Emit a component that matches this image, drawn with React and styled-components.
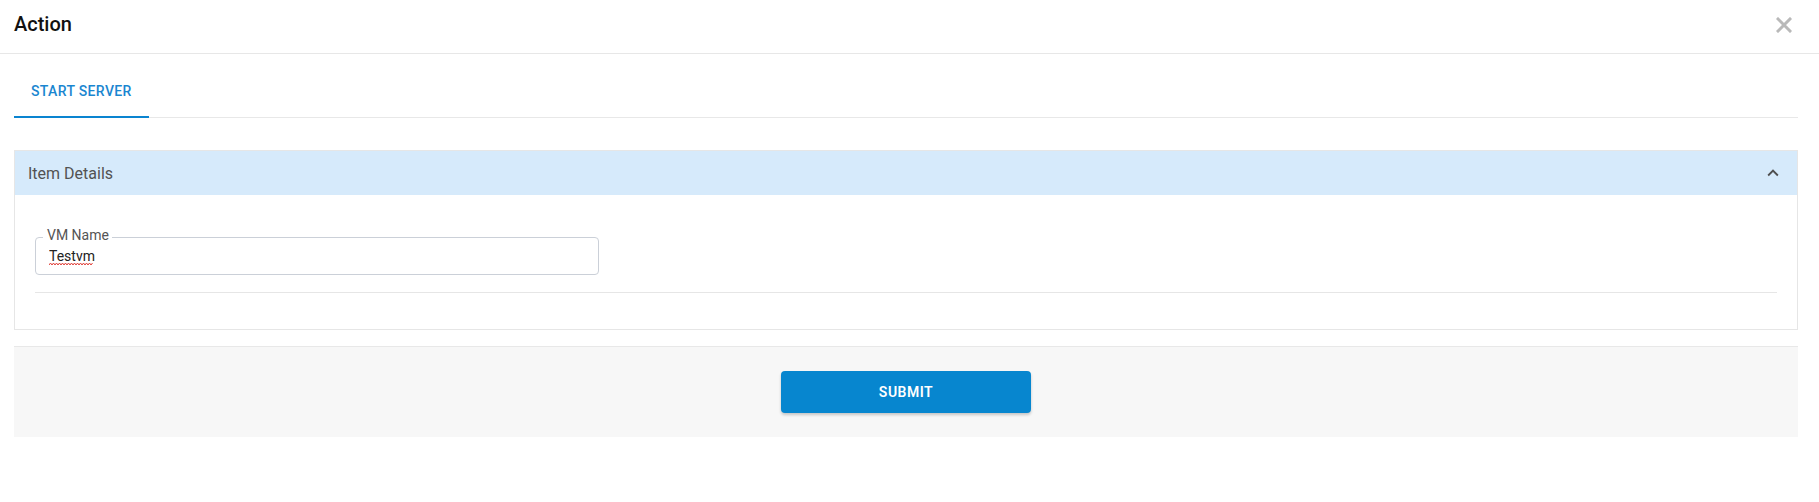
import React from "react";
import styled, { createGlobalStyle } from "styled-components";

const GlobalStyle = createGlobalStyle`
  body {
    margin: 0;
    background: #fff;
    font-family: Roboto, "Liberation Sans", Arial, sans-serif;
  }
`;

const CloseIcon = () => (
  <svg width="16" height="16" viewBox="0 0 16 16">
    <path d="M2 2L14 14M14 2L2 14" stroke="currentColor" strokeWidth="3" strokeLinecap="square" />
  </svg>
);

const ExpandLess = () => (
  <svg width="22" height="22" viewBox="0 0 24 24" fill="currentColor">
    <path d="M12 8l-6 6 1.41 1.41L12 10.83l4.59 4.58L18 14z" />
  </svg>
);

const Squiggle = () => (
  <SquiggleMark width="44" height="4" viewBox="0 0 44 4">
    <path
      d="M0 3 L1.5 1 L3 3 L4.5 1 L6 3 L7.5 1 L9 3 L10.5 1 L12 3 L13.5 1 L15 3 L16.5 1 L18 3 L19.5 1 L21 3 L22.5 1 L24 3 L25.5 1 L27 3 L28.5 1 L30 3 L31.5 1 L33 3 L34.5 1 L36 3 L37.5 1 L39 3 L40.5 1 L42 3 L43.5 1"
      fill="none"
      stroke="#e0403a"
      strokeWidth="1"
    />
  </SquiggleMark>
);

const App = () => {
  return (
    <>
      <GlobalStyle />
      <Dialog>
        <Header>
          <Title>Action</Title>
          <CloseButton aria-label="close">
            <CloseIcon />
          </CloseButton>
        </Header>
        <Content>
          <TabBar>
            <Tab active>Start Server</Tab>
          </TabBar>
          <Panel>
            <PanelHeader>
              <PanelTitle>Item Details</PanelTitle>
              <Chevron>
                <ExpandLess />
              </Chevron>
            </PanelHeader>
            <PanelBody>
              <Field>
                <FieldLabel>VM Name</FieldLabel>
                <TextInput defaultValue="Testvm" spellCheck={false} />
                <Squiggle />
              </Field>
              <Divider />
            </PanelBody>
          </Panel>
          <Footer>
            <SubmitButton>Submit</SubmitButton>
          </Footer>
        </Content>
      </Dialog>
    </>
  );
};

export default App;

const Dialog = styled.div`
  width: 100%;
  min-height: 502px;
  background: #fff;
`;
const Header = styled.div`
  height: 54px;
  box-sizing: border-box;
  padding: 12px 27px 0 14px;
  display: flex;
  justify-content: space-between;
  align-items: flex-start;
  border-bottom: 1px solid #e7e7e7;
`;
const Title = styled.h2`
  margin: 0;
  font-size: 20px;
  line-height: 24px;
  font-weight: 500;
  color: #111;
`;
const CloseButton = styled.button`
  border: none;
  background: none;
  padding: 0;
  margin-top: 5px;
  color: #b9b9b9;
  display: flex;
  cursor: pointer;
`;
const Content = styled.div`
  padding: 0 21px 0 14px;
`;
const TabBar = styled.div`
  margin-top: 15px;
  height: 48px;
  display: flex;
  border-bottom: 1px solid #e8e8e8;
`;
const Tab = styled.div`
  height: 49px;
  box-sizing: border-box;
  margin-bottom: -1px;
  padding: 0 17px 3px 17px;
  display: flex;
  align-items: center;
  font-size: 14px;
  font-weight: 500;
  letter-spacing: 0.35px;
  text-transform: uppercase;
  color: ${(p) => (p.active ? "#1a86d0" : "#666")};
  border-bottom: 2px solid ${(p) => (p.active ? "#0a84d0" : "transparent")};
`;
const Panel = styled.div`
  margin-top: 32px;
  border: 1px solid #e6e6e6;
`;
const PanelHeader = styled.div`
  height: 44px;
  padding: 0 13px 0 13px;
  display: flex;
  align-items: center;
  justify-content: space-between;
  background: #d6eafb;
`;
const PanelTitle = styled.span`
  font-size: 16px;
  color: #525252;
`;
const Chevron = styled.span`
  display: flex;
  color: #4f4f4f;
`;
const PanelBody = styled.div`
  padding: 42px 20px 36px 20px;
`;
const Field = styled.div`
  position: relative;
  width: 564px;
`;
const FieldLabel = styled.label`
  position: absolute;
  top: -10px;
  left: 8px;
  padding: 0 3px 0 4px;
  background: #fff;
  font-size: 14px;
  line-height: 16px;
  color: #555;
`;
const TextInput = styled.input`
  display: block;
  width: 100%;
  height: 38px;
  box-sizing: border-box;
  border: 1px solid #cbd0d8;
  border-radius: 4px;
  padding: 0 13px;
  font-family: inherit;
  font-size: 14px;
  color: #222;
  outline: none;
`;
const SquiggleMark = styled.svg`
  position: absolute;
  left: 14px;
  top: 25px;
  pointer-events: none;
`;
const Divider = styled.div`
  margin-top: 17px;
  height: 1px;
  background: #e6e6e6;
`;
const Footer = styled.div`
  margin-top: 16px;
  height: 91px;
  box-sizing: border-box;
  border-top: 1px solid #e8e8e8;
  background: #f7f7f7;
  display: flex;
  align-items: center;
  justify-content: center;
`;
const SubmitButton = styled.button`
  width: 250px;
  height: 42px;
  border: none;
  border-radius: 4px;
  background: #0786cf;
  color: #fff;
  font-family: inherit;
  font-size: 14px;
  font-weight: 600;
  letter-spacing: 0.5px;
  text-transform: uppercase;
  box-shadow: 0 2px 3px rgba(0, 0, 0, 0.2);
  cursor: pointer;
`;
